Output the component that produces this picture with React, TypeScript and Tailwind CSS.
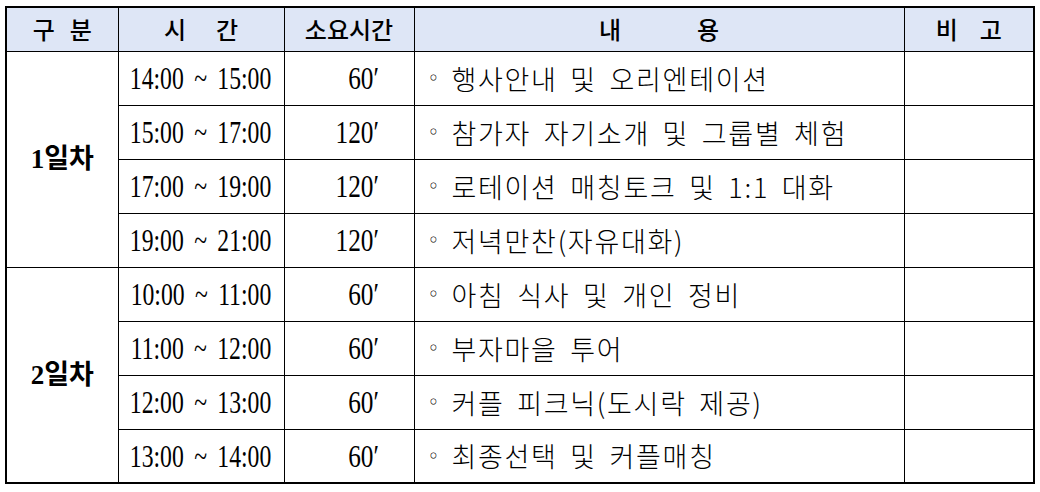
import React from "react";

type Row = { time: string; dur: string; content: string };

const day1: Row[] = [
  { time: "14:00 ~ 15:00", dur: "60′", content: "행사안내 및 오리엔테이션" },
  { time: "15:00 ~ 17:00", dur: "120′", content: "참가자 자기소개 및 그룹별 체험" },
  { time: "17:00 ~ 19:00", dur: "120′", content: "로테이션 매칭토크 및 1:1 대화" },
  { time: "19:00 ~ 21:00", dur: "120′", content: "저녁만찬(자유대화)" },
];

const day2: Row[] = [
  { time: "10:00 ~ 11:00", dur: "60′", content: "아침 식사 및 개인 정비" },
  { time: "11:00 ~ 12:00", dur: "60′", content: "부자마을 투어" },
  { time: "12:00 ~ 13:00", dur: "60′", content: "커플 피크닉(도시락 제공)" },
  { time: "13:00 ~ 14:00", dur: "60′", content: "최종선택 및 커플매칭" },
];

function Cells({ r }: { r: Row }) {
  return (
    <>
      <td className="border border-black p-0">
        <div className="flex justify-center items-center">
          <span className="inline-block origin-center scale-x-[0.74] font-['Liberation_Serif',serif] text-[32px] leading-none whitespace-nowrap [word-spacing:6px]">
            {r.time}
          </span>
        </div>
      </td>
      <td className="border border-black p-0">
        <div className="flex justify-end items-center pr-[35px]">
          <span className="inline-block origin-right scale-x-[0.79] font-['Liberation_Serif',serif] text-[32px] leading-none whitespace-nowrap">
            {r.dur}
          </span>
        </div>
      </td>
      <td className="border border-black p-0">
        <div className="flex items-center pl-[13px] whitespace-nowrap">
          <span className="font-['DejaVu_Sans',sans-serif] text-[20px] leading-none w-[24px]">◦</span>
          <span className="font-['Noto_Sans_CJK_KR',sans-serif] font-light text-[27px] leading-none tracking-[1.7px] [word-spacing:5px]">
            {r.content}
          </span>
        </div>
      </td>
      <td className="border border-black p-0"></td>
    </>
  );
}

function Day({ label, rows }: { label: React.ReactNode; rows: Row[] }) {
  return (
    <>
      {rows.map((r, i) => (
        <tr key={i} className="h-[54px]">
          {i === 0 && (
            <td
              rowSpan={rows.length}
              className="border border-black p-0 text-center font-bold text-[27px] font-['Liberation_Serif','Noto_Sans_CJK_KR',serif]"
            >
              {label}
            </td>
          )}
          <Cells r={r} />
        </tr>
      ))}
    </>
  );
}

export default function App() {
  const hd = "border border-black p-0 bg-[#dee6f6] font-['Noto_Sans_CJK_KR',sans-serif] text-[24px] font-medium leading-none";
  return (
    <div className="w-[1040px] h-[492px] bg-white overflow-hidden pt-[6px] pl-[5px] text-black">
      <table className="table-fixed border-collapse w-[1028px] border-2 border-black">
        <colgroup>
          <col className="w-[112px]" />
          <col className="w-[166px]" />
          <col className="w-[130px]" />
          <col className="w-[490px]" />
          <col className="w-[130px]" />
        </colgroup>
        <thead>
          <tr className="h-[44px]">
            <th className={hd}>
              <div className="flex justify-center gap-[15px]"><span>구</span><span>분</span></div>
            </th>
            <th className={hd}>
              <div className="flex justify-center gap-[30px]"><span>시</span><span>간</span></div>
            </th>
            <th className={hd}>
              <div className="flex justify-center"><span>소요시간</span></div>
            </th>
            <th className={hd}>
              <div className="flex justify-center gap-[76px]"><span>내</span><span>용</span></div>
            </th>
            <th className={hd}>
              <div className="flex justify-center gap-[22px]"><span>비</span><span>고</span></div>
            </th>
          </tr>
        </thead>
        <tbody>
          <Day label="1일차" rows={day1} />
          <Day label="2일차" rows={day2} />
        </tbody>
      </table>
    </div>
  );
}
